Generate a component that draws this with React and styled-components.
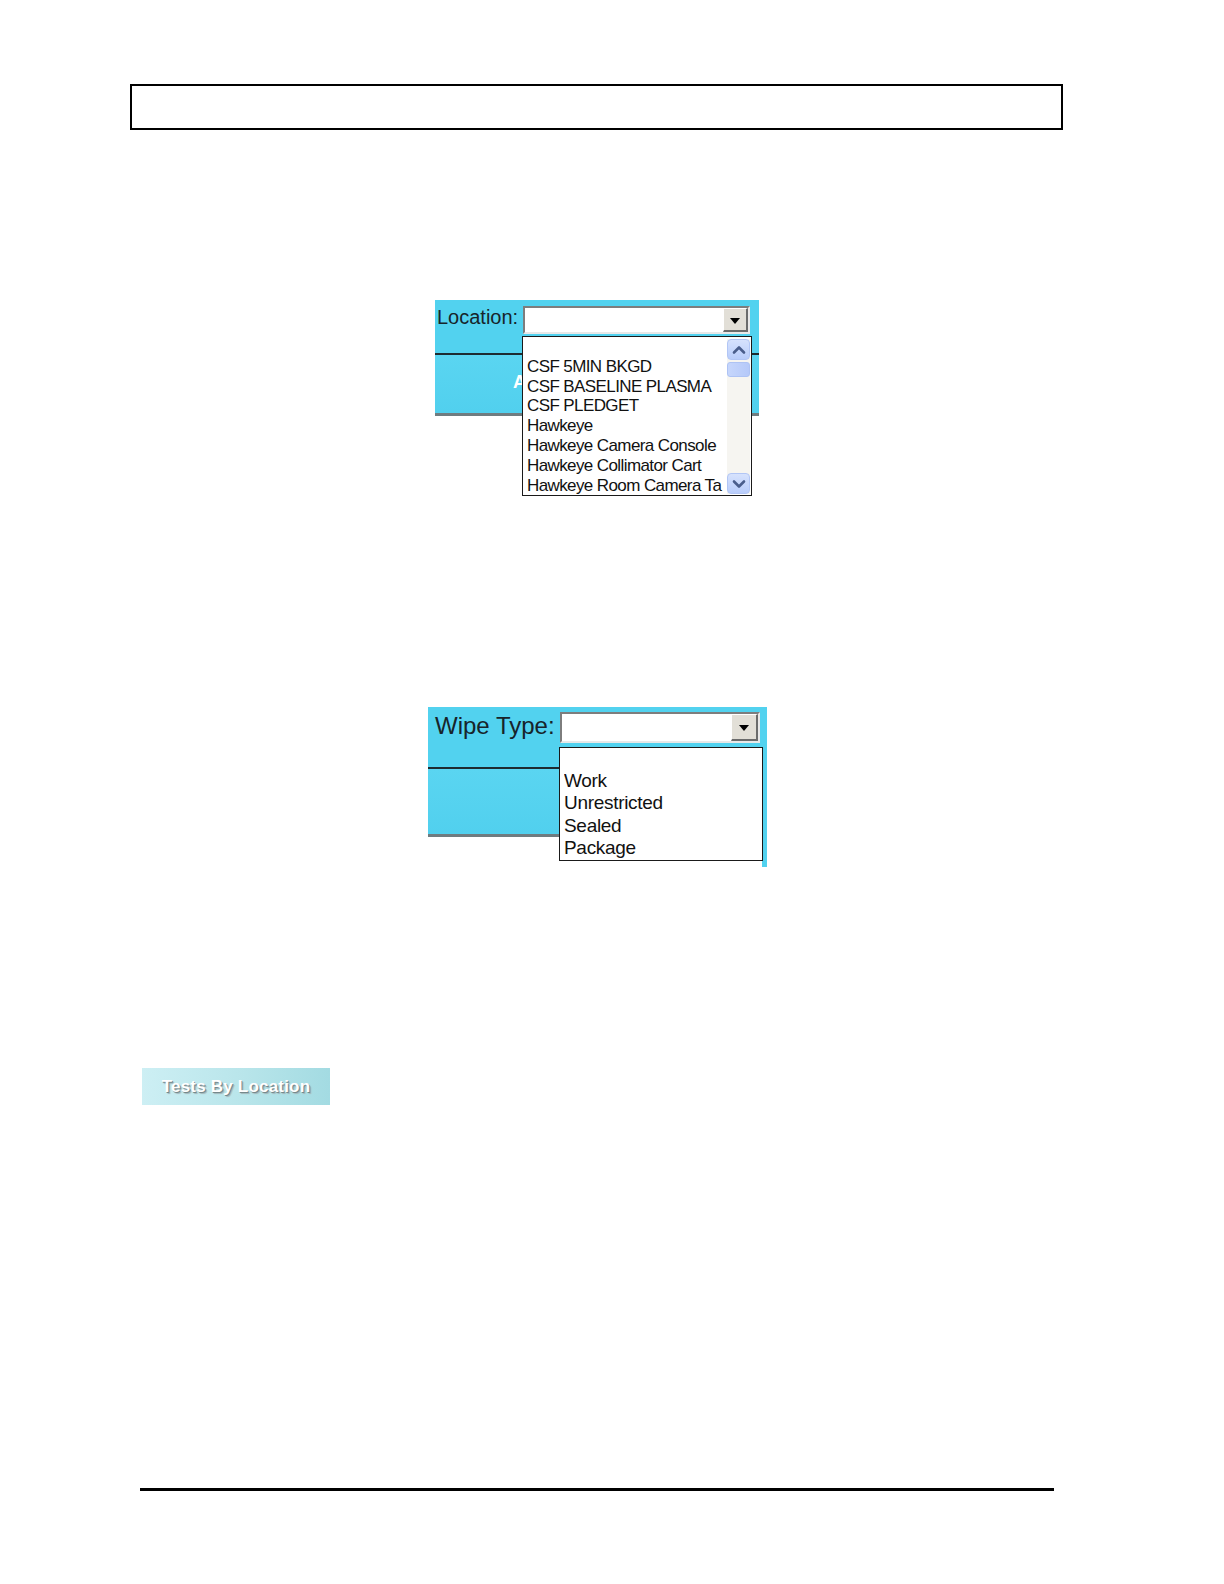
import React from "react";
import styled, { createGlobalStyle } from "styled-components";

const GlobalStyle = createGlobalStyle`
  html, body {
    margin: 0;
    padding: 0;
    background: #ffffff;
  }
  body {
    font-family: "Liberation Sans", Arial, sans-serif;
  }
`;

const Page = styled.div`
  width: 1224px;
  height: 1584px;
  display: flex;
  flex-direction: column;
  align-items: flex-start;
  box-sizing: border-box;
  overflow: hidden;
`;

const HeaderBox = styled.div`
  margin: 84px 0 0 130px;
  width: 933px;
  height: 46px;
  border: 2px solid #000;
  box-sizing: border-box;
`;

const Shot = styled.div`
  position: relative;
  margin-top: ${(p) => p.$top}px;
  margin-left: ${(p) => p.$left}px;
  width: ${(p) => p.$width}px;
  height: ${(p) => p.$height}px;
`;

const Panel = styled.div`
  background: #52d2ef;
  display: flex;
  flex-direction: column;
  border-bottom: 3px solid #6f7c80;
`;

const TopRow = styled.div`
  display: flex;
  align-items: flex-start;
  height: ${(p) => p.$height}px;
  padding: ${(p) => p.$padTop}px 0 0 ${(p) => p.$padLeft}px;
  box-sizing: border-box;
  border-bottom: 2px solid #1d2b30;
`;

const Label = styled.span`
  width: ${(p) => p.$width}px;
  flex: none;
  font-size: ${(p) => p.$size}px;
  line-height: ${(p) => p.$lh}px;
  color: #17242a;
  white-space: nowrap;
`;

const LowerArea = styled.div`
  height: ${(p) => p.$height}px;
  background: linear-gradient(180deg, #5ad5f1 0%, #51d0ee 100%);
  padding: 17px 0 0 78px;
  box-sizing: border-box;
`;

const HiddenCaption = styled.span`
  color: #ffffff;
  font-weight: bold;
  font-size: 18px;
  line-height: 20px;
`;

const Combo = styled.div`
  width: ${(p) => p.$width}px;
  height: ${(p) => p.$height}px;
  background: #fff;
  box-sizing: border-box;
  border-top: 2px solid #7d7d7d;
  border-left: 2px solid #7d7d7d;
  border-right: 2px solid #e8e8e8;
  border-bottom: 2px solid #e8e8e8;
  display: flex;
  justify-content: flex-end;
  align-items: stretch;
`;

const DropButton = styled.div`
  width: ${(p) => p.$width}px;
  background: #e2dfd7;
  box-sizing: border-box;
  border-top: 1px solid #ffffff;
  border-left: 1px solid #ffffff;
  border-right: 2px solid #6b6b6b;
  border-bottom: 2px solid #6b6b6b;
  display: flex;
  align-items: center;
  justify-content: center;
`;

const Arrow = styled.div`
  width: 0;
  height: 0;
  border-left: 5px solid transparent;
  border-right: 5px solid transparent;
  border-top: 6px solid #000;
  margin-top: 2px;
`;

const DropList = styled.div`
  position: absolute;
  left: ${(p) => p.$left}px;
  top: ${(p) => p.$top}px;
  width: ${(p) => p.$width}px;
  height: ${(p) => p.$height}px;
  background: #fff;
  border: 1px solid #1a1a1a;
  box-sizing: border-box;
  display: flex;
  overflow: hidden;
`;

const Options = styled.div`
  flex: 1;
  display: flex;
  flex-direction: column;
  padding-left: ${(p) => p.$padLeft}px;
  overflow: hidden;
`;

const Option = styled.div`
  flex: none;
  height: ${(p) => p.$row}px;
  line-height: ${(p) => p.$row}px;
  font-size: ${(p) => p.$size}px;
  letter-spacing: ${(p) => p.$spacing}px;
  color: #111;
  white-space: nowrap;
  overflow: hidden;
`;

const ScrollTrack = styled.div`
  width: 23px;
  margin: 2px 1px 1px 0;
  background: #f6f5f1;
  display: flex;
  flex-direction: column;
  justify-content: space-between;
`;

const ScrollTop = styled.div`
  display: flex;
  flex-direction: column;
  gap: 2px;
`;

const ScrollButton = styled.div`
  height: 21px;
  border-radius: 4px;
  background: linear-gradient(180deg, #d6e2fd 0%, #b9cdfb 100%);
  border: 1px solid #b2c6f5;
  box-sizing: border-box;
  display: flex;
  align-items: center;
  justify-content: center;
`;

const Thumb = styled.div`
  height: 15px;
  border-radius: 3px;
  background: linear-gradient(90deg, #c6d6fc 0%, #b5c9f9 100%);
  border: 1px solid #aec3f4;
  box-sizing: border-box;
`;

const RightStrip = styled.div`
  position: absolute;
  right: 0;
  top: 0;
  width: 5px;
  height: 100%;
  background: #52d2ef;
`;

const ToolButton = styled.div`
  margin: 201px 0 0 142px;
  width: 188px;
  height: 37px;
  background: linear-gradient(90deg, #cdeff4 0%, #b8e5ea 55%, #a3dbe2 100%);
  display: flex;
  align-items: center;
  justify-content: center;
  font-family: "Liberation Sans", Arial, sans-serif;
  font-weight: bold;
  font-size: 17px;
  color: #ffffff;
  text-shadow: 1px 1px 0 #76898c, 2px 2px 1px #a3b6b9;
  letter-spacing: 0.2px;
`;

const FooterRule = styled.div`
  margin: 383px 0 0 140px;
  width: 914px;
  height: 3px;
  background: #000;
`;

const Chevron = ({ down }) => (
  <svg width="14" height="10" viewBox="0 0 14 10">
    <path
      d={down ? "M2 2.5 L7 7.5 L12 2.5" : "M2 7.5 L7 2.5 L12 7.5"}
      fill="none"
      stroke="#4a5e8c"
      strokeWidth="2.6"
      strokeLinecap="round"
      strokeLinejoin="round"
    />
  </svg>
);

const locations = [
  "",
  "CSF 5MIN BKGD",
  "CSF BASELINE PLASMA",
  "CSF PLEDGET",
  "Hawkeye",
  "Hawkeye Camera Console",
  "Hawkeye Collimator Cart",
  "Hawkeye Room Camera Ta",
];

const wipeTypes = ["", "Work", "Unrestricted", "Sealed", "Package"];

export default function App() {
  return (
    <Page>
      <GlobalStyle />
      <HeaderBox />

      <Shot $top={170} $left={435} $width={324} $height={196}>
        <Panel>
          <TopRow $height={55} $padTop={6} $padLeft={2}>
            <Label $width={86} $size={20} $lh={22}>
              Location:
            </Label>
            <Combo $width={227} $height={28}>
              <DropButton $width={25}>
                <Arrow />
              </DropButton>
            </Combo>
          </TopRow>
          <LowerArea $height={58}>
            <HiddenCaption>Add</HiddenCaption>
          </LowerArea>
        </Panel>
        <DropList $left={87} $top={36} $width={230} $height={160}>
          <Options $padLeft={4}>
            {locations.map((item, i) => (
              <Option key={i} $row={19.8} $size={17} $spacing={-0.6}>
                {item}
              </Option>
            ))}
          </Options>
          <ScrollTrack>
            <ScrollTop>
              <ScrollButton>
                <Chevron />
              </ScrollButton>
              <Thumb />
            </ScrollTop>
            <ScrollButton>
              <Chevron down />
            </ScrollButton>
          </ScrollTrack>
        </DropList>
      </Shot>

      <Shot $top={211} $left={428} $width={339} $height={160}>
        <Panel>
          <TopRow $height={62} $padTop={5} $padLeft={7}>
            <Label $width={125} $size={24} $lh={28}>
              Wipe Type:
            </Label>
            <Combo $width={200} $height={31}>
              <DropButton $width={27}>
                <Arrow />
              </DropButton>
            </Combo>
          </TopRow>
          <LowerArea $height={65} />
        </Panel>
        <RightStrip />
        <DropList $left={131} $top={40} $width={204} $height={114}>
          <Options $padLeft={4}>
            {wipeTypes.map((item, i) => (
              <Option key={i} $row={22.2} $size={19} $spacing={-0.3}>
                {item}
              </Option>
            ))}
          </Options>
        </DropList>
      </Shot>

      <ToolButton>Tests By Location</ToolButton>

      <FooterRule />
    </Page>
  );
}
